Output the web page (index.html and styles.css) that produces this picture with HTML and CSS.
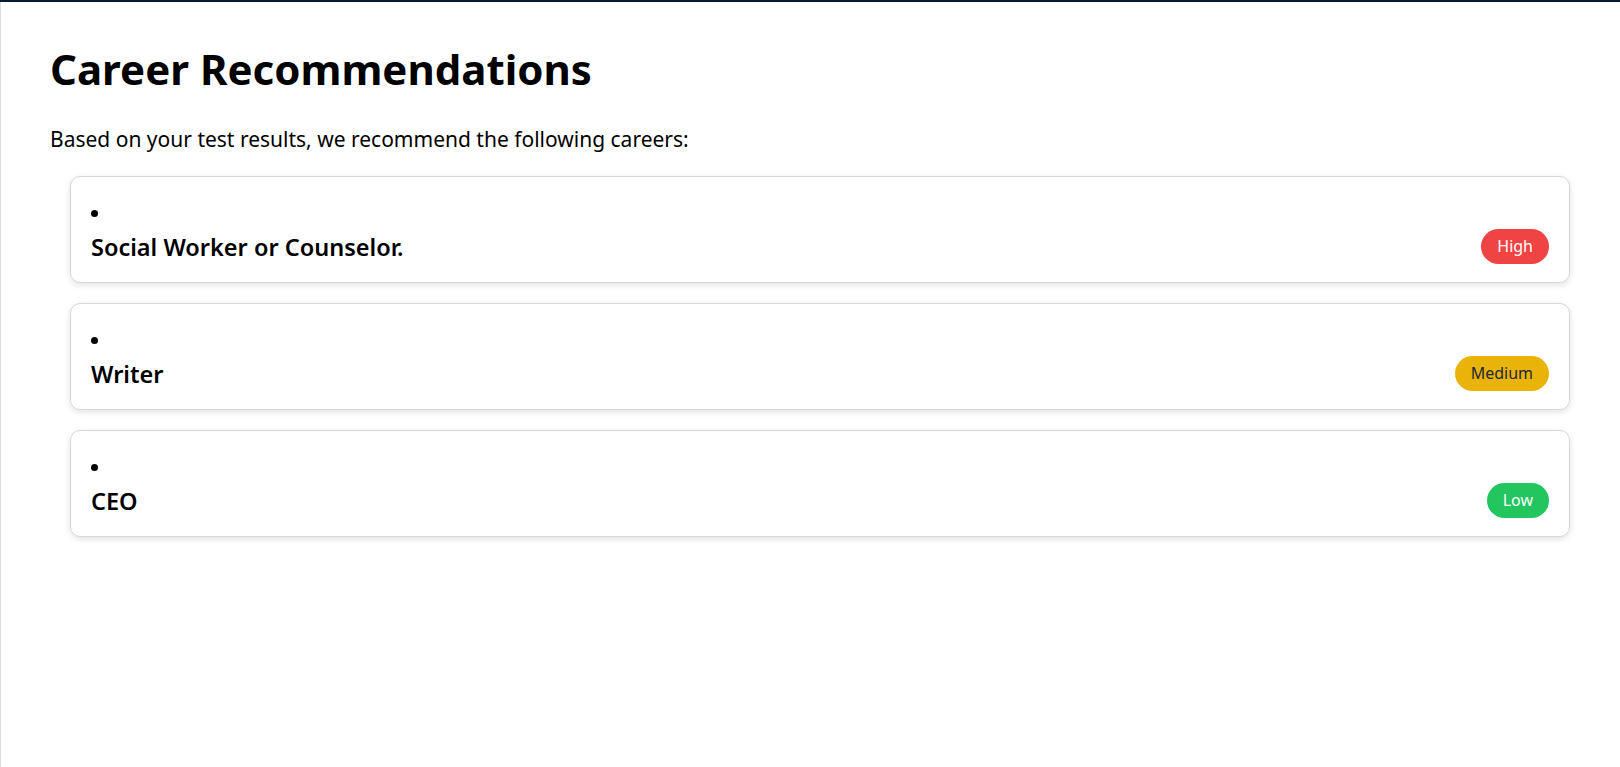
FILE: index.html
```html
<!DOCTYPE html>
<html lang="en">
<head>
<meta charset="utf-8">
<title>Career Recommendations</title>
<link rel="stylesheet" href="styles.css">
</head>
<body>
<main class="page">
  <h1 class="title">Career Recommendations</h1>
  <p class="intro">Based on your test results, we recommend the following careers:</p>
  <ul class="careers">
    <li class="career">
      <div class="career-row">
        <h3 class="career-name">Social Worker or Counselor.</h3>
        <span class="badge badge-high">High</span>
      </div>
    </li>
    <li class="career">
      <div class="career-row">
        <h3 class="career-name">Writer</h3>
        <span class="badge badge-medium">Medium</span>
      </div>
    </li>
    <li class="career">
      <div class="career-row">
        <h3 class="career-name">CEO</h3>
        <span class="badge badge-low">Low</span>
      </div>
    </li>
  </ul>
</main>
</body>
</html>
```

FILE: styles.css
```css
html, body {
  margin: 0;
  padding: 0;
  background: #ffffff;
}

body {
  border-top: 2px solid #0b1a33;
  font-family: "Noto Sans", "Open Sans", sans-serif;
  color: #000;
}

.page {
  box-sizing: border-box;
  min-height: calc(100vh - 2px);
  border-left: 1px solid #dcdcdc;
  padding: 38px 50px 40px 49px;
}

.title {
  margin: 0;
  font-size: 42px;
  font-weight: 700;
  line-height: 57px;
}

.intro {
  margin: 28px 0 0;
  font-size: 21px;
  line-height: 28px;
}

.careers {
  margin: 23px 0 0;
  padding: 0 0 0 20px;
  list-style: disc inside;
  display: flex;
  flex-direction: column;
  gap: 20px;
}

.career {
  border: 1px solid #d6d6dc;
  border-radius: 10px;
  padding: 20px 20px 18px;
  box-shadow: 0 2px 6px rgba(0, 0, 0, 0.12);
  font-size: 21px;
  line-height: 31px;
}

.career-row {
  display: flex;
  justify-content: space-between;
  align-items: center;
}

.career-name {
  margin: 0;
  padding-top: 3px;
  font-size: 23.5px;
  font-weight: 600;
  line-height: 33px;
}

.badge {
  font-size: 16px;
  line-height: 23px;
  padding: 6px 16px;
  border-radius: 999px;
}

.badge-high {
  background: #ef4444;
  color: #fff;
}

.badge-medium {
  background: #eab308;
  color: #1f2937;
}

.badge-low {
  background: #22c55e;
  color: #fff;
}
```
